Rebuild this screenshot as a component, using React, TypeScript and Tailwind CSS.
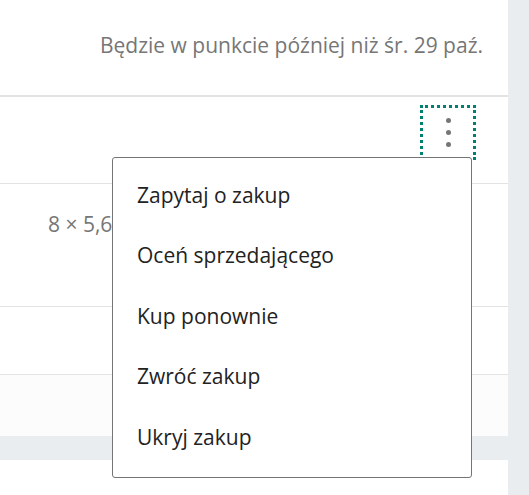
import React from "react";

export default function App() {
  const items = ["Zapytaj o zakup", "Oceń sprzedającego", "Kup ponownie", "Zwróć zakup", "Ukryj zakup"];
  return (
    <div
      className="relative flex w-[529px] h-[495px] overflow-hidden bg-white"
      style={{ fontFamily: '"Open Sans", "Noto Sans", sans-serif' }}
    >
      <div className="flex flex-col w-[508px]">
        <div className="h-[95px] flex items-start justify-end pr-[25px] pt-[31px] text-[21px] leading-[28px] text-[#767676]">
          Będzie w punkcie później niż śr. 29 paź.
        </div>
        <div className="h-[2px] bg-[#e3e3e3]" />
        <div className="h-[86px] flex justify-end pr-[32px] pt-[8px]">
          <button className="w-[56px] h-[55px] border-[3px] border-dotted border-[#00806e] flex flex-col items-center justify-center gap-[7px]">
            <span className="w-[5px] h-[5px] rounded-full bg-[#767676]" />
            <span className="w-[5px] h-[5px] rounded-full bg-[#767676]" />
            <span className="w-[5px] h-[5px] rounded-full bg-[#767676]" />
          </button>
        </div>
        <div className="h-[1px] bg-[#e3e3e3]" />
        <div className="h-[122px] pl-[48px] pt-[26px] text-[21px] leading-[28px] text-[#767676]">8 × 5,6</div>
        <div className="h-[1px] bg-[#e3e3e3]" />
        <div className="h-[67px]" />
        <div className="h-[1px] bg-[#e3e3e3]" />
        <div className="h-[61px] bg-[#fcfcfc]" />
        <div className="h-[24px] bg-[#eaedf0]" />
        <div className="flex-1 bg-white" />
      </div>
      <div className="w-[21px] bg-[#e9edf0]" />
      <div className="absolute left-[112px] top-[157px] w-[360px] h-[321px] bg-white border border-[#757575] rounded-[3px] py-[7px]">
        {items.map((t) => (
          <div key={t} className="h-[60.5px] flex items-center pl-[24px] text-[21px] text-[#222222]">
            {t}
          </div>
        ))}
      </div>
    </div>
  );
}
